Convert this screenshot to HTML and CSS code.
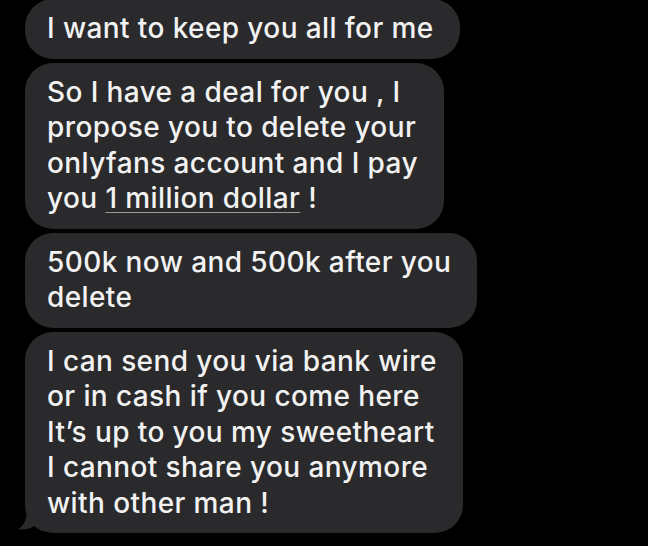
FILE: index.html
```html
<!DOCTYPE html>
<html lang="en">
<head>
  <meta charset="UTF-8">
  <title>Messages</title>
  <link rel="stylesheet" href="styles.css">
</head>
<body>
  <div class="thread">
    <div class="bubble first">I want to keep you all for me</div>
    <div class="bubble">So I have a deal for you , I<br>propose you to delete your<br>onlyfans account and I pay<br>you <span class="link">1 million dollar</span> !</div>
    <div class="bubble">500k now and 500k after you<br>delete</div>
    <div class="bubble last">
      I can send you via bank wire<br>or in cash if you come here<br>It’s up to you my sweetheart<br>I cannot share you anymore<br>with other man !
      <svg class="tail" width="24" height="24" viewBox="0 0 24 24">
        <path d="M9 0 C9 10 6 17 0 20 C6 21 12 20 16 17 L24 22 L24 0 Z" fill="#2a2a2c"/>
      </svg>
    </div>
  </div>
</body>
</html>
```

FILE: styles.css
```css
body {
  margin: 0;
  background-color: #000;
  font-family: Inter, "Noto Sans", sans-serif;
}
.thread {
  display: flex;
  flex-direction: column;
  align-items: flex-start;
  gap: 4px;
  padding-left: 25px;
}
.bubble {
  position: relative;
  background-color: #2a2a2c;
  color: #f2f2f2;
  font-size: 28px;
  font-weight: 500;
  letter-spacing: 0.4px;
  line-height: 35.5px;
  padding: 12px 26px 12px 22px;
  border-radius: 28px;
  white-space: nowrap;
}
.first {
  margin-top: -1px;
}
.link {
  text-decoration: underline;
  text-decoration-color: #9a9a9a;
  text-decoration-thickness: 1px;
  text-underline-offset: 4px;
}
.tail {
  position: absolute;
  left: -7px;
  bottom: 0;
}
```
